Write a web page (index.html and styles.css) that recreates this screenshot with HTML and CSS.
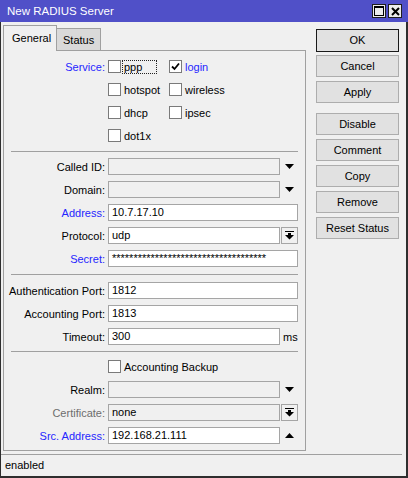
FILE: index.html
```html
<!DOCTYPE html>
<html>
<head>
<meta charset="utf-8">
<link rel="stylesheet" href="styles.css">
</head>
<body>
<div class="window">
  <div class="titlebar">
    <span class="title">New RADIUS Server</span>
    <div class="tb-btns">
      <span class="tb-btn"><svg width="10" height="10" viewBox="0 0 10 10"><rect x="0.5" y="0.5" width="9" height="9" fill="none" stroke="#000"/><rect x="0" y="0" width="10" height="2" fill="#000"/></svg></span>
      <span class="tb-btn"><svg width="9" height="9" viewBox="0 0 9 9"><path d="M1 1 L8 8 M8 1 L1 8" stroke="#000" stroke-width="2"/></svg></span>
    </div>
  </div>
  <div class="main">
    <div class="left">
      <div class="tabs">
        <div class="tab active">General</div>
        <div class="tab inactive">Status</div>
      </div>
      <div class="panel">
        <div class="row">
          <span class="lbl blue">Service:</span>
          <div class="checks">
            <span class="chk"><span class="box"></span><span class="focus">ppp</span></span>
            <span class="chk"><span class="box"><svg width="11" height="11" viewBox="0 0 11 11"><path d="M2 5.5 L4.5 8 L9 2.5" fill="none" stroke="#000" stroke-width="1.8"/></svg></span><span class="ctext blue">login</span></span>
          </div>
        </div>
        <div class="row">
          <span class="lbl"></span>
          <div class="checks">
            <span class="chk"><span class="box"></span><span class="ctext">hotspot</span></span>
            <span class="chk"><span class="box"></span><span class="ctext">wireless</span></span>
          </div>
        </div>
        <div class="row">
          <span class="lbl"></span>
          <div class="checks">
            <span class="chk"><span class="box"></span><span class="ctext">dhcp</span></span>
            <span class="chk"><span class="box"></span><span class="ctext">ipsec</span></span>
          </div>
        </div>
        <div class="row">
          <span class="lbl"></span>
          <div class="checks">
            <span class="chk"><span class="box"></span><span class="ctext">dot1x</span></span>
          </div>
        </div>
        <div class="sep sep1"></div>
        <div class="row">
          <span class="lbl">Called ID:</span>
          <span class="field short disabled"></span>
          <span class="icon"><svg width="9" height="5" viewBox="0 0 9 5"><polygon points="0,0 9,0 4.5,5" fill="#000"/></svg></span>
        </div>
        <div class="row">
          <span class="lbl">Domain:</span>
          <span class="field short disabled"></span>
          <span class="icon"><svg width="9" height="5" viewBox="0 0 9 5"><polygon points="0,0 9,0 4.5,5" fill="#000"/></svg></span>
        </div>
        <div class="row">
          <span class="lbl blue">Address:</span>
          <span class="field full">10.7.17.10</span>
        </div>
        <div class="row">
          <span class="lbl">Protocol:</span>
          <span class="field short">udp</span>
          <span class="icon btn"><svg width="9" height="9" viewBox="0 0 9 9"><rect x="0" y="0" width="9" height="1" fill="#000"/><polygon points="3,2 6,2 6,4 9,4 4.5,8.5 0,4 3,4" fill="#000"/></svg></span>
        </div>
        <div class="row">
          <span class="lbl blue">Secret:</span>
          <span class="field full secret">************************************</span>
        </div>
        <div class="sep sep2"></div>
        <div class="row">
          <span class="lbl">Authentication Port:</span>
          <span class="field full">1812</span>
        </div>
        <div class="row">
          <span class="lbl">Accounting Port:</span>
          <span class="field full">1813</span>
        </div>
        <div class="row">
          <span class="lbl">Timeout:</span>
          <span class="field short">300</span>
          <span class="unit">ms</span>
        </div>
        <div class="sep sep3"></div>
        <div class="row">
          <span class="lbl"></span>
          <span class="chk"><span class="box"></span><span class="ctext">Accounting Backup</span></span>
        </div>
        <div class="row">
          <span class="lbl">Realm:</span>
          <span class="field short disabled"></span>
          <span class="icon"><svg width="9" height="5" viewBox="0 0 9 5"><polygon points="0,0 9,0 4.5,5" fill="#000"/></svg></span>
        </div>
        <div class="row">
          <span class="lbl gray">Certificate:</span>
          <span class="field short disabled">none</span>
          <span class="icon btn"><svg width="9" height="9" viewBox="0 0 9 9"><rect x="0" y="0" width="9" height="1" fill="#000"/><polygon points="3,2 6,2 6,4 9,4 4.5,8.5 0,4 3,4" fill="#000"/></svg></span>
        </div>
        <div class="row">
          <span class="lbl blue">Src. Address:</span>
          <span class="field short">192.168.21.111</span>
          <span class="icon"><svg width="9" height="5" viewBox="0 0 9 5"><polygon points="0,5 9,5 4.5,0" fill="#000"/></svg></span>
        </div>
      </div>
    </div>
    <div class="buttons">
      <div class="button default">OK</div>
      <div class="button">Cancel</div>
      <div class="button">Apply</div>
      <div class="button gap">Disable</div>
      <div class="button">Comment</div>
      <div class="button">Copy</div>
      <div class="button">Remove</div>
      <div class="button">Reset Status</div>
    </div>
  </div>
  <div class="statusbar">enabled</div>
</div>
</body>
</html>
```
FILE: styles.css
```css
html, body {
  margin: 0;
  padding: 0;
  background: #f0f0f0;
}
body {
  font-family: "Liberation Sans", Arial, sans-serif;
  font-size: 11px;
  color: #000;
}
.window {
  width: 408px;
  height: 478px;
  box-sizing: border-box;
  border-left: 1px solid #2e2e2e;
  border-right: 2px solid #2e2e2e;
  border-bottom: 2px solid #2e2e2e;
  display: flex;
  flex-direction: column;
  background: #f0f0f0;
}
.titlebar {
  height: 22px;
  flex: none;
  margin: 0 -2px 0 -1px;
  background: #5050c8;
  color: #fff;
  display: flex;
  align-items: center;
  justify-content: space-between;
  padding-left: 7px;
  font-size: 11.5px;
}
.tb-btns {
  display: flex;
  gap: 2px;
  margin-right: 6px;
}
.tb-btn {
  width: 14px;
  height: 14px;
  box-sizing: border-box;
  border: 1px solid #1e1e1e;
  background: #ececec;
  display: flex;
  align-items: center;
  justify-content: center;
}
.main {
  flex: 1;
  display: flex;
  padding-left: 2px;
}
.left {
  width: 303px;
  display: flex;
  flex-direction: column;
  padding-top: 3px;
}
.tabs {
  display: flex;
  align-items: flex-end;
  height: 25px;
  flex: none;
}
.tab {
  box-sizing: border-box;
  border: 1px solid #a0a0a0;
  border-bottom: none;
  line-height: 13px;
}
.tab.active {
  height: 26px;
  width: 54px;
  margin-bottom: -1px;
  background: #f0f0f0;
  position: relative;
  z-index: 1;
  padding: 6px 0 0 8px;
}
.tab.inactive {
  height: 22px;
  width: 44px;
  border-left: none;
  background: #d9d9d9;
  padding: 5px 0 0 6px;
}
.panel {
  flex: 1;
  box-sizing: border-box;
  border: 1px solid #a0a0a0;
  margin-bottom: 3px;
  padding-top: 4px;
}
.row {
  height: 23px;
  display: flex;
  align-items: center;
}
.lbl {
  width: 101px;
  margin-right: 3px;
  text-align: right;
  white-space: nowrap;
  flex: none;
}
.blue { color: #2626ff; }
.gray { color: #6d6d6d; }
.checks {
  display: flex;
}
.chk {
  width: 61px;
  display: flex;
  align-items: center;
  white-space: nowrap;
}
.box {
  width: 13px;
  height: 13px;
  box-sizing: border-box;
  border: 1px solid #7a7a7a;
  background: #fff;
  margin-right: 1px;
  display: flex;
  align-items: center;
  justify-content: center;
  flex: none;
}
.ctext {
  margin-left: 2px;
}
.focus {
  width: 35px;
  height: 14px;
  box-sizing: border-box;
  border: 1px dotted #222;
  padding-left: 1px;
  line-height: 12px;
}
.field {
  height: 17px;
  box-sizing: border-box;
  border: 1px solid #a5a5a5;
  background: #fff;
  padding-left: 3px;
  line-height: 15px;
  white-space: nowrap;
  overflow: hidden;
  flex: none;
}
.field.full { width: 190px; }
.field.short { width: 172px; }
.field.disabled { background: #f0f0f0; }
.secret {
  line-height: 14px;
}
.icon {
  width: 17px;
  height: 17px;
  margin-left: 1px;
  box-sizing: border-box;
  display: flex;
  align-items: center;
  justify-content: center;
  flex: none;
}
.icon.btn {
  border: 1px solid #a5a5a5;
  background: #f0f0f0;
}
.unit {
  margin-left: 3px;
}
.sep {
  height: 1px;
  background: #a0a0a0;
  margin: 4px 7px 3px 7px;
}
.sep2 { margin-bottom: 4px; }
.sep3 { margin-top: 3px; }
.buttons {
  width: 83px;
  margin-left: 10px;
  padding-top: 7px;
  display: flex;
  flex-direction: column;
}
.button {
  height: 22px;
  box-sizing: border-box;
  border: 1px solid #adadad;
  background: #e1e1e1;
  text-align: center;
  line-height: 20px;
  margin-bottom: 4px;
}
.button.default {
  height: 23px;
  border-color: #1a1a1a;
  line-height: 21px;
  margin-bottom: 3px;
}
.button.gap {
  margin-top: 6px;
}
.statusbar {
  height: 21px;
  flex: none;
  box-sizing: border-box;
  border-top: 1px solid #a0a0a0;
  margin: 0 4px 1px 0;
  padding-left: 4px;
  line-height: 20px;
}
```
